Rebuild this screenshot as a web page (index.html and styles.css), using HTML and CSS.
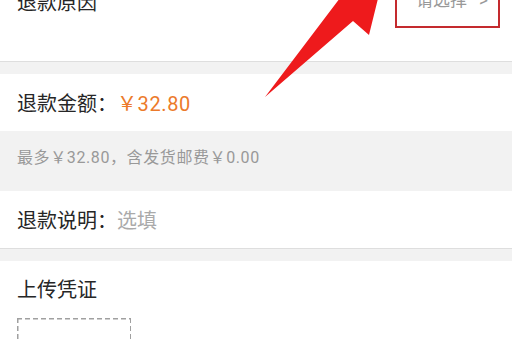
FILE: index.html
```html
<!DOCTYPE html>
<html lang="zh">
<head>
<meta charset="utf-8">
<link rel="stylesheet" href="styles.css">
</head>
<body>
<div class="page">
  <div class="block reason">
    <span class="label">退款原因</span>
    <span class="select">请选择<span class="chev">&gt;</span></span>
  </div>
  <div class="block row amount">
    <span class="label">退款金额：</span><span class="price">￥32.80</span>
  </div>
  <div class="hint">最多￥32.80，含发货邮费￥0.00</div>
  <div class="block row note">
    <span class="label">退款说明：</span><span class="placeholder">选填</span>
  </div>
  <div class="block upload">
    <div class="title">上传凭证</div>
    <div class="dropzone"></div>
  </div>
</div>
<div class="annot-box"></div>
<svg class="annot-arrow" width="512" height="120" viewBox="0 0 512 120">
  <polygon points="265,97 340,-2 318,-14 388,-42 369,35 353,21" fill="#ee1a1c"/>
</svg>
</body>
</html>
```
FILE: styles.css
```css
html, body {
  margin: 0;
  padding: 0;
  background: #f2f2f2;
  overflow: hidden;
}
body {
  width: 512px;
  height: 340px;
  position: relative;
  font-family: "Roboto", "Noto Sans CJK SC", "Noto Sans", sans-serif;
  color: #262626;
}
.page {
  display: flex;
  flex-direction: column;
}
.block {
  background: #fff;
}
.reason {
  margin-top: -20px;
  height: 82px;
  box-sizing: border-box;
  border-bottom: 1px solid #dedede;
  display: flex;
  align-items: flex-start;
  justify-content: space-between;
  padding: 10px 24px 0 17px;
}
.reason .label {
  font-size: 20px;
  line-height: 26px;
}
.reason .select {
  font-size: 17px;
  line-height: 18px;
  color: #999;
  padding-top: 1px;
  display: flex;
  gap: 12px;
}
.row {
  display: flex;
  align-items: center;
  padding-left: 17px;
  font-size: 20px;
}
.amount {
  margin-top: 12px;
  height: 57px;
}
.price {
  color: #ec7a2b;
  letter-spacing: 0.6px;
}
.hint {
  height: 60px;
  box-sizing: border-box;
  padding: 16px 0 0 17px;
  font-size: 16px;
  line-height: 22px;
  letter-spacing: 0.6px;
  color: #999;
}
.note {
  height: 58px;
  box-sizing: border-box;
  border-bottom: 1px solid #dedede;
}
.placeholder {
  color: #aaa;
}
.upload {
  margin-top: 12px;
  padding: 17px 0 0 17px;
  height: 120px;
}
.title {
  font-size: 20px;
  line-height: 24px;
  color: #262626;
}
.dropzone {
  margin-top: 16px;
  width: 114px;
  height: 100px;
  box-sizing: border-box;
  background:
    repeating-linear-gradient(90deg, #a0a0a0 0 5px, transparent 5px 8px) top left / 100% 1.5px no-repeat,
    repeating-linear-gradient(90deg, #a0a0a0 0 5px, transparent 5px 8px) bottom left / 100% 1.5px no-repeat,
    repeating-linear-gradient(180deg, #a0a0a0 0 5px, transparent 5px 8px) top left / 1.5px 100% no-repeat,
    repeating-linear-gradient(180deg, #a0a0a0 0 5px, transparent 5px 8px) top right / 1.5px 100% no-repeat;
}
.annot-box {
  position: absolute;
  left: 395px;
  top: -20px;
  width: 105px;
  height: 48px;
  box-sizing: border-box;
  border: 2px solid #c42a2e;
}
.annot-arrow {
  position: absolute;
  left: 0;
  top: 0;
}
```
